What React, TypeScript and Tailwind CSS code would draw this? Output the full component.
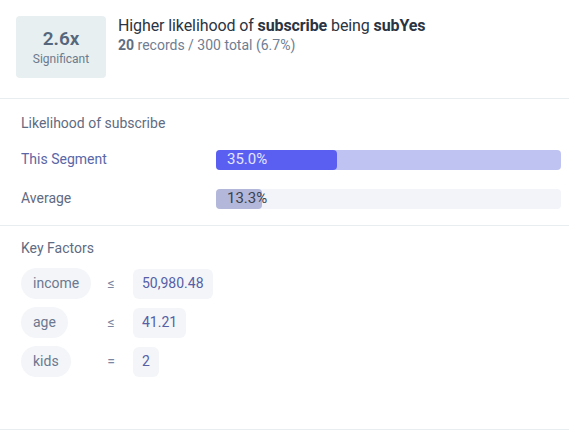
import React from "react";

const factors = [
  { name: "income", op: "≤", value: "50,980.48" },
  { name: "age", op: "≤", value: "41.21" },
  { name: "kids", op: "=", value: "2" },
];

export default function App() {
  return (
    <div
      className="w-[569px] h-[436px] bg-white overflow-hidden"
      style={{ fontFamily: "Roboto, 'Liberation Sans', sans-serif" }}
    >
      {/* Header */}
      <div className="flex items-start gap-3 pl-4 pt-4 pb-5 border-b border-[#e8eef0]">
        <div className="w-[90px] h-[62px] rounded bg-[#e7eff0] flex flex-col items-center justify-center">
          <div className="text-[19px] leading-6 font-semibold text-[#56677b]">2.6x</div>
          <div className="text-[12px] leading-4 text-[#6b7a8c]">Significant</div>
        </div>
        <div>
          <div className="text-[16px] leading-[20px] text-[#2b3442] tracking-[-0.1px]">
            Higher likelihood of <span className="font-bold">subscribe</span> being{" "}
            <span className="font-bold">subYes</span>
          </div>
          <div className="text-[14px] leading-[18px] text-[#6f7d92]">
            <span className="font-bold text-[#5f6d82]">20</span> records / 300 total (6.7%)
          </div>
        </div>
      </div>

      {/* Likelihood */}
      <div className="pl-[21px] pr-2 pt-[14px] pb-[16px] border-b border-[#e8eef0]">
        <div className="text-[14px] leading-5 text-[#5f6b82]">Likelihood of subscribe</div>
        <div className="mt-[16px] flex flex-col gap-[18px]">
          <div className="flex items-center">
            <div className="w-[195px] shrink-0 text-[14px] text-[#5a66a6]">This Segment</div>
            <div className="relative flex-1 h-[20px] rounded bg-[#bfc3f2]">
              <div className="absolute left-0 top-0 h-full w-[35%] rounded bg-[#5a5ff2]" />
              <div className="absolute left-[11px] top-0 h-full flex items-center text-[15px] text-[#e4e6ff]">
                35.0%
              </div>
            </div>
          </div>
          <div className="flex items-center">
            <div className="w-[195px] shrink-0 text-[14px] text-[#5f6b82]">Average</div>
            <div className="relative flex-1 h-[20px] rounded bg-[#f3f4f9]">
              <div className="absolute left-0 top-0 h-full w-[13.3%] rounded bg-[#b3b7d9]" />
              <div className="absolute left-[11px] top-0 h-full flex items-center text-[15px] text-[#3a4250]">
                13.3%
              </div>
            </div>
          </div>
        </div>
      </div>

      {/* Key Factors */}
      <div className="px-[21px] pt-[12px] h-[204px] border-b border-[#e8eef0]">
        <div className="text-[14px] leading-5 text-[#5f6b82]">Key Factors</div>
        <div className="mt-[10px] flex flex-col gap-[8px]">
          {factors.map((f) => (
            <div key={f.name} className="flex items-center h-[31px]">
              <div className="w-[68px]">
                <span className="inline-flex items-center h-[31px] px-3 rounded-full bg-[#f3f5f8] text-[14px] text-[#6b7890]">
                  {f.name}
                </span>
              </div>
              <div className="w-[44px] text-center text-[14px] text-[#7a86a0]">{f.op}</div>
              <span className="inline-flex items-center h-[30px] px-[9px] rounded-md bg-[#f4f5f9] text-[14px] text-[#5560a6]">
                {f.value}
              </span>
            </div>
          ))}
        </div>
      </div>
    </div>
  );
}
